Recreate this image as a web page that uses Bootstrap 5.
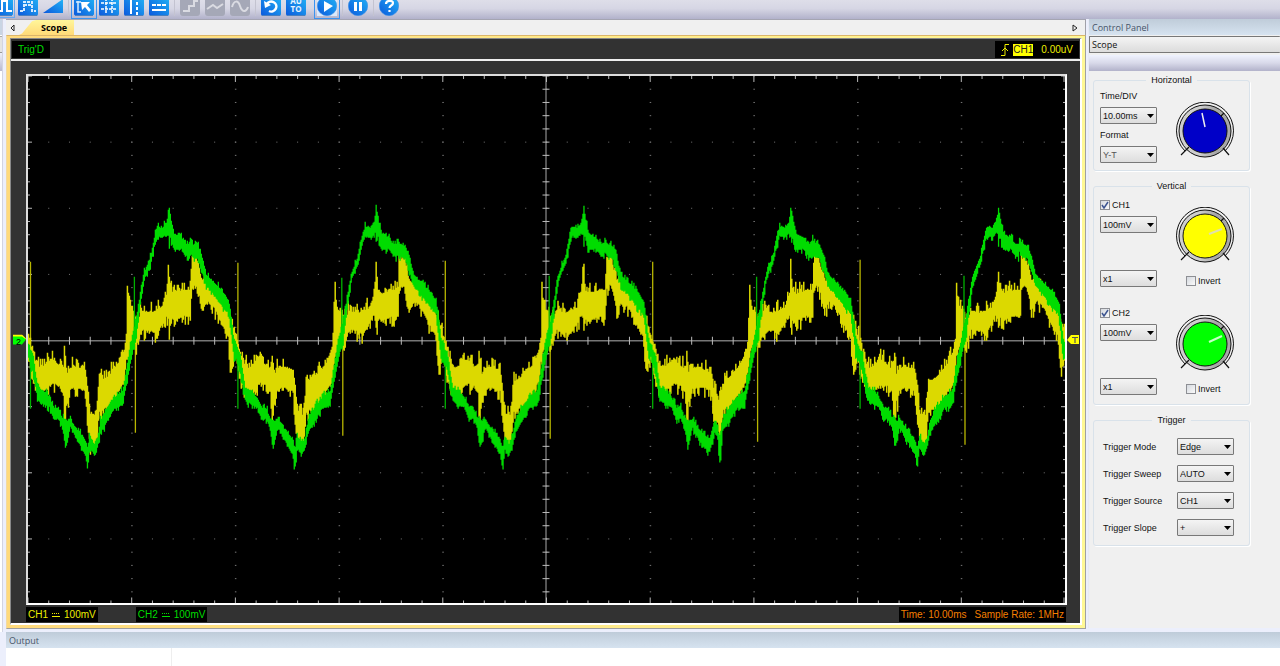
<!DOCTYPE html>
<html lang="en">
<head>
<meta charset="utf-8">
<meta name="viewport" content="width=device-width, initial-scale=1">
<title>Scope</title>
<link href="https://cdn.jsdelivr.net/npm/bootstrap@5.3.0/dist/css/bootstrap.min.css" rel="stylesheet">
<script src="https://cdn.jsdelivr.net/npm/bootstrap@5.3.0/dist/js/bootstrap.bundle.min.js" defer></script>
<style>
body{background:#eceffc;font:9px/12px "Liberation Sans",Arial,sans-serif;color:#111;overflow:hidden}
button{border:0;background:none;padding:0;line-height:0}
svg{display:block;flex:none}
.ui{font-family:"Open Sans","Noto Sans",sans-serif}
.toolbar{height:19px;background:linear-gradient(#dedee9,#d6d6e4 45%,#b2b2cb);overflow:hidden;gap:5px;padding-bottom:3px}
.toolbar button{width:20px;height:20px;flex:none}
.toolbar .lead-in{margin-left:-7px;outline:1px solid #68a9ef;outline-offset:1px;background:#dbe9fb}
.toolbar .picked{outline:1px solid #3b93f0;outline-offset:2px;background:#dbe9fb}
.toolbar .rule{width:1px;height:20px;background:#c3c3d0;flex:none}
.edge{width:3px;background:linear-gradient(#c9d5e4 0 16px,#fff 16px 17px,#aaa 17px 18px,#e4e4e4 18px 33px,#999 33px 34px,#eef0fa 34px,#b8b8cf 52px,#fff 52px);border-right:1px solid #d2d4e2;overflow:hidden}
.dock{margin:0 0 3px 3px;background:#f0f0f0}
.tabs{height:16px;border-top:1px solid #a5a5b2;border-right:1px solid #a0a0a8}
.tabs .arrow{width:12px;height:15px}
.tab{margin-left:1px;width:55px;height:15px;padding-left:22px;line-height:16px;font-weight:700;color:#000;background:linear-gradient(#fff69a,#ffda78);clip-path:polygon(0 100%,3px 90%,13px 8%,17px 0,100% 0,100% 100%)}
.frame{padding:2px 3px 3px 3px;background:linear-gradient(90deg,#ffda7c,#fff895);border:1px solid #a0a0a0;border-left-color:#f3d9a0;border-top-color:#dbb56a}
.scope{background:#323232;border:1px solid #888;border-right:2px solid #fff;border-bottom:2px solid #fff;font-size:10px}
.readouts{height:22px;border-bottom:2px solid #eee;padding:2px 0 0 1px}
.readouts .trigger{margin-right:1px}
.lcd{background:#000;height:17px;line-height:17px;padding:0 6px;white-space:nowrap}
.plotbox{margin:13px 13px 0 15px;border:2px solid #ddd;border-right-color:#fff;border-bottom-color:#fff;background:#000;min-height:0}
.plotbox>svg{width:100%;height:100%;flex:1 1 0;min-height:0}
.marker{position:absolute;top:50%;transform:translateY(-50%)}
.marker.zero{right:100%;margin-right:2px}
.marker.trig{left:100%;margin-left:2px}
.status{padding:2px 14px 1px 15px;height:18px;gap:38px}
.status .lcd{height:15px;line-height:15px;padding:0 2px}
.orange{color:#f57f00}.yel{color:#ee0}.grn{color:#00dc00}
.panel{width:192px;margin-left:2px;border-left:1px solid #e8eaf5;background:#f0f0f0}
.title{height:16px;line-height:17px;background:linear-gradient(#bfccd9,#d6e3f0);color:#465468;padding-left:3px}
.wide{height:17px;margin-top:1px}
.band{height:16px;margin-top:2px;background:linear-gradient(#eff2fe,#d8d9e9 50%,#b2b2ca)}
select{appearance:none;font:inherit;color:#111;border:1px solid #787878;border-radius:1px;height:17px;width:57px;padding:0 0 0 2px;background:url("data:image/svg+xml,%3Csvg xmlns='http://www.w3.org/2000/svg' width='7' height='4'%3E%3Cpath d='M0 0h7L3.500 4z'/%3E%3C/svg%3E") no-repeat right 2px center,linear-gradient(#f4f4f4,#ddd)}
select.wide{width:100%;border-right:0;background:linear-gradient(#f4f4f4,#dcdcdc)}
.groups{gap:9px;padding-top:3px}
fieldset{width:157px;margin-left:4px;border:1px solid #d9e2ea;border-radius:3px;box-shadow:1px 1px 0 #fff;padding:0 6px}
fieldset>div{margin-right:9px}
legend{float:none;width:auto;margin:0 auto;padding:0 5px;font-size:9px;line-height:12px;height:12px}
.tick{appearance:none;width:10px;height:10px;margin:0;border:1px solid #8d8f94;background:linear-gradient(135deg,#d5d9df,#fafafa);flex:none}
.tick:checked{background:url("data:image/svg+xml,%3Csvg xmlns='http://www.w3.org/2000/svg' viewBox='0 0 8 8'%3E%3Cpath d='M1 4l2 3 4-6' fill='none' stroke='%233c5490' stroke-width='1.500'/%3E%3C/svg%3E"),linear-gradient(135deg,#d5d9df,#fafafa)}
.check{gap:2px}
.field{gap:5px}
.horizontal{padding:4px 0 7px}
.horizontal svg{margin-top:12px}
.horizontal #fmt{color:#555}
.vertical{gap:20px;padding:7px 0 9px}
.knobrow{height:65px;margin-bottom:6px}
.knobrow svg{margin-top:8px}
.invert{width:48px}
.triggers{gap:10px;padding:12px 0 9px 3px}
.output{height:34px;margin-left:6px;background:#fff}
.outcol{width:166px;border-right:1px solid #eee}
</style>
</head>
<body class="vh-100 d-flex flex-column">
<svg width="0" height="0" class="position-absolute" aria-hidden="true">
  <defs>
    <linearGradient id="blue" x1="1" y1="0" x2="0" y2="1"><stop offset="0" stop-color="#22b4f6"/><stop offset="1" stop-color="#0b58dc"/></linearGradient>
    <linearGradient id="ring"><stop offset=".4" stop-color="#cecece"/><stop offset=".7" stop-color="#a8a8a8"/></linearGradient>
    <g id="tile"><rect width="20" height="20" rx="2" fill="url(#blue)"/><path d="M1 19.500h18" stroke="#4a7fbd"/></g>
    <g id="disc"><circle cx="10" cy="10" r="9.700" fill="url(#blue)" stroke="#3e8fe4" stroke-width=".6"/></g>
    <g id="dial">
      <path d="M9 49A28.500 28.500 0 1 1 49 49" fill="none" stroke="#111"/>
      <circle cx="29" cy="29" r="26" fill="url(#ring)" stroke="#111"/>
      <path d="M5 53l8-8M53 53l-6-7M44 15l4-4" stroke="#111" stroke-width="1.200"/>
    </g>
  </defs>
</svg>

<header class="toolbar d-flex align-items-end flex-shrink-0">
  <button class="lead-in" aria-label="Pulse"><svg width="20" height="20"><use href="#tile"/><path d="M2 15h7V5h5v10h5" fill="none" stroke="#fff" stroke-width="2"/></svg></button>
  <button aria-label="Pulse train"><svg width="20" height="20"><use href="#tile"/><path d="M2 15h4V6h8v9h4M6 9h8" fill="none" stroke="#d6eafd" stroke-width="2" stroke-dasharray="3 1"/></svg></button>
  <button aria-label="Ramp"><svg width="20" height="20"><path d="M0 17L20 3v14z" fill="url(#blue)"/></svg></button>
  <span class="rule"></span>
  <button class="picked" aria-label="Select"><svg width="20" height="20"><use href="#tile"/><path d="M2 6h5M4 5v11h3" stroke="#d6eafd" fill="none" stroke-width="1.500"/><path d="M7 6h9l-3 3 4 5-2 2-4-5-3 3z" fill="#fff"/></svg></button>
  <button aria-label="Grid"><svg width="20" height="20"><use href="#tile"/><path d="M2 7h16M2 13h16M7 2v16M13 2v16" stroke="#fff" stroke-width="1.500" stroke-dasharray="3 1"/></svg></button>
  <button aria-label="Vertical cursors"><svg width="20" height="20"><use href="#tile"/><path d="M7 2v16" stroke="#fff" stroke-width="2"/><path d="M13 1v18" stroke="#fff" stroke-width="2" stroke-dasharray="3 2"/></svg></button>
  <button aria-label="Horizontal cursors"><svg width="20" height="20"><use href="#tile"/><path d="M3 14h14" stroke="#fff" stroke-width="2"/><path d="M3 9h15" stroke="#fff" stroke-width="2" stroke-dasharray="4 1"/></svg></button>
  <span class="rule"></span>
  <button aria-label="Step" disabled><svg width="20" height="20"><rect width="20" height="20" rx="3" fill="#a5a8b7"/><path d="M3 15h6v-5h5V5h4" fill="none" stroke="#dadbe2" stroke-width="2"/></svg></button>
  <button aria-label="Linear" disabled><svg width="20" height="20"><rect width="20" height="20" rx="3" fill="#a5a8b7"/><path d="M2 13l6-4 4 3 6-4" fill="none" stroke="#dadbe2" stroke-width="2"/></svg></button>
  <button aria-label="Sine" disabled><svg width="20" height="20"><rect width="20" height="20" rx="3" fill="#a5a8b7"/><path d="M2 11C4 4 8 4 10 10s6 7 8 1" fill="none" stroke="#dadbe2" stroke-width="2"/></svg></button>
  <span class="rule"></span>
  <button aria-label="Refresh"><svg width="20" height="20"><use href="#tile"/><path d="M6 8a5 5 0 1 1 2 7" fill="none" stroke="#fff" stroke-width="2.500"/><path d="M3 5l1 7 6-3z" fill="#fff"/></svg></button>
  <button aria-label="Auto"><svg width="20" height="20" font-family="Open Sans" font-weight="700" font-size="8" fill="#e8f4ff" text-anchor="middle"><use href="#tile"/><text x="10" y="8">AU</text><text x="10" y="16">TO</text></svg></button>
  <span class="rule invisible"></span>
  <button class="picked" aria-label="Run"><svg width="20" height="20"><use href="#disc"/><path d="M7 5l9 5-9 6z" fill="#fff"/></svg></button>
  <span class="rule"></span>
  <button aria-label="Pause"><svg width="20" height="20"><use href="#disc"/><path d="M7.500 6v9M12.500 6v9" stroke="#fff" stroke-width="3"/></svg></button>
  <span class="rule"></span>
  <button aria-label="Help"><svg width="20" height="20"><use href="#disc"/><path d="M7 8c0-4 7-4 7-1 0 3-3.500 2-3.500 5M10.500 14v2" fill="none" stroke="#fff" stroke-width="2.200"/></svg></button>
</header>

<div class="d-flex flex-grow-1" style="min-height:0">
  <div class="edge flex-shrink-0"></div>
  <main class="dock d-flex flex-column flex-grow-1">
    <nav class="tabs d-flex">
      <button class="arrow" aria-label="Previous tab"><svg width="12" height="15"><path d="M8 5v6l-3-3z" fill="none" stroke="#222"/></svg></button>
      <a href="#" class="tab ui text-decoration-none">Scope</a>
      <button class="arrow ms-auto me-1" aria-label="Next tab"><svg width="12" height="15"><path d="M4 5v6l4-3z" fill="none" stroke="#222"/></svg></button>
    </nav>
    <div class="frame d-flex flex-column flex-grow-1">
      <section class="scope d-flex flex-column flex-grow-1">
        <div class="readouts d-flex justify-content-between">
          <span class="lcd grn">Trig'D</span>
          <span class="lcd yel trigger d-flex align-items-center">
            <svg class="me-1" width="8" height="14"><path d="M0 12.500h4V1.500h4M1 8l3-3 3 3" fill="none" stroke="#ee0"/></svg>
            <span style="background:#ff0;color:#222;line-height:12px">CH1</span><span class="ms-2">0.00uV</span>
          </span>
        </div>
        <div class="plotbox d-flex flex-grow-1 position-relative">
          <svg id="plot" viewBox="0 0 1038 528" preserveAspectRatio="none" role="img" aria-label="Waveforms of CH1 and CH2"></svg>
          <span class="marker zero"><svg width="13" height="11"><path d="M0 0h9l4 4-4 4H0z" fill="#ff0"/><path d="M0 2h9l4 3-4 5H0z" fill="#0f0"/><text x="3" y="10" font-size="9">2</text></svg></span>
          <span class="marker trig"><svg width="12" height="10"><path d="M12 0H4L0 5l4 4h8z" fill="#ff0"/><path d="M5 2.500h6M8 2v6" stroke="#555" stroke-width="1.200"/></svg></span>
        </div>
        <div class="status d-flex">
          <span class="lcd yel d-flex align-items-center gap-1"><span>CH1</span><svg width="8" height="6"><path d="M0 1.500h8" stroke="#ee0" stroke-dasharray="1 1"/><path d="M0 4.500h8" stroke="#ee0"/></svg><span>100mV</span></span>
          <span class="lcd grn d-flex align-items-center gap-1"><span>CH2</span><svg width="8" height="6"><path d="M0 1.500h8" stroke="#00dc00" stroke-dasharray="1 1"/><path d="M0 4.500h8" stroke="#00dc00"/></svg><span>100mV</span></span>
          <span class="lcd orange d-flex ms-auto gap-2"><span>Time: 10.00ms</span><span>Sample Rate: 1MHz</span></span>
        </div>
      </section>
    </div>
  </main>

  <aside class="panel flex-shrink-0 mb-1">
    <div class="title ui">Control Panel</div>
    <select class="wide ui d-block" aria-label="Instrument"><option>Scope</option></select>
    <div class="band"></div>
    <div class="groups d-flex flex-column">
      <fieldset>
        <legend>Horizontal</legend>
        <div class="horizontal d-flex justify-content-between align-items-start">
          <div class="d-flex flex-column field">
            <label for="tdiv">Time/DIV</label>
            <select id="tdiv"><option>10.00ms</option></select>
            <label for="fmt">Format</label>
            <select id="fmt"><option>Y-T</option></select>
          </div>
          <svg width="58" height="58"><use href="#dial"/><circle cx="29" cy="29" r="22" fill="#0000c8" stroke="#111"/><path d="M26 11l3 14" stroke="#eee" stroke-width="1.500"/></svg>
        </div>
      </fieldset>
      <fieldset>
        <legend>Vertical</legend>
        <div class="vertical d-flex flex-column">
          <div>
            <div class="knobrow d-flex justify-content-between">
              <div class="d-flex flex-column field">
                <label class="check d-flex align-items-center"><input type="checkbox" class="tick" checked>CH1</label>
                <select aria-label="CH1 scale"><option>100mV</option></select>
              </div>
              <svg width="58" height="58"><use href="#dial"/><circle cx="29" cy="29" r="22" fill="#ff0" stroke="#111"/><path d="M33 27l13-5" stroke="#e0e0b0" stroke-width="2"/></svg>
            </div>
            <div class="d-flex justify-content-between align-items-center">
              <select aria-label="CH1 probe"><option>x1</option></select>
              <label class="invert check d-flex align-items-center mt-1"><input type="checkbox" class="tick">Invert</label>
            </div>
          </div>
          <div>
            <div class="knobrow d-flex justify-content-between">
              <div class="d-flex flex-column field">
                <label class="check d-flex align-items-center"><input type="checkbox" class="tick" checked>CH2</label>
                <select aria-label="CH2 scale"><option>100mV</option></select>
              </div>
              <svg width="58" height="58"><use href="#dial"/><circle cx="29" cy="29" r="22" fill="#0f0" stroke="#111"/><path d="M33 27l13-6" stroke="#c8ffc8" stroke-width="2"/></svg>
            </div>
            <div class="d-flex justify-content-between align-items-center">
              <select aria-label="CH2 probe"><option>x1</option></select>
              <label class="invert check d-flex align-items-center mt-1"><input type="checkbox" class="tick">Invert</label>
            </div>
          </div>
        </div>
      </fieldset>
      <fieldset>
        <legend>Trigger</legend>
        <div class="triggers d-flex flex-column">
          <div class="d-flex justify-content-between align-items-center"><label for="t1">Trigger Mode</label><select id="t1"><option>Edge</option></select></div>
          <div class="d-flex justify-content-between align-items-center"><label for="t2">Trigger Sweep</label><select id="t2"><option>AUTO</option></select></div>
          <div class="d-flex justify-content-between align-items-center"><label for="t3">Trigger Source</label><select id="t3"><option>CH1</option></select></div>
          <div class="d-flex justify-content-between align-items-center"><label for="t4">Trigger Slope</label><select id="t4"><option>+</option></select></div>
        </div>
      </fieldset>
    </div>
  </aside>
</div>

<footer class="output d-flex flex-column flex-shrink-0">
  <div class="title ui">Output</div>
  <div class="outcol flex-grow-1"></div>
</footer>

<script>
// Envelopes of one mains cycle, three units per screen pixel: position, top, bottom.
const ch1=[[82,430,480],[84,440,500],[92,475,550],[105,520,588],[120,535,600],[140,515,585],[155,507,572],[175,530,580],[187,535,600],[190,495,690],[193,510,690],[197,550,620],[200,550,640],[206,535,590],[225,530,585],[254,540,595],[257,570,660],[266,650,720],[268,670,755],[285,675,750],[290,620,700],[293,575,660],[320,560,640],[350,525,600],[370,480,565],[376,440,500],[378,270,490],[381,320,480],[388,360,460],[397,362,440],[405,385,460],[415,380,440],[420,362,412],[450,368,415],[465,362,425],[485,352,390],[495,320,368],[500,310,370],[502,225,380],[505,260,420],[509,300,375],[520,310,385],[550,300,370],[569,300,375],[572,205,290],[585,205,275],[595,240,310],[603,270,355],[620,285,325],[640,310,345],[655,330,380],[670,345,410],[682,370,430],[688,390,510],[692,400,540],[700,420,490],[705,440,500]];
const ch2=[[82,460,490],[84,470,505],[95,490,540],[110,590,625],[130,602,640],[145,620,645],[160,650,685],[172,650,680],[185,685,710],[189,685,740],[193,690,768],[200,690,745],[208,685,705],[220,705,730],[240,730,765],[254,750,790],[257,765,820],[261,770,825],[266,735,770],[280,760,790],[290,740,765],[298,690,725],[315,655,695],[340,620,650],[365,600,640],[375,540,580],[385,480,530],[395,430,480],[404,390,450],[408,370,420],[418,310,340],[430,245,260],[450,195,215],[460,140,165],[470,108,130],[485,112,138],[497,95,125],[502,65,120],[504,50,165],[508,75,130],[515,110,165],[520,130,175],[540,140,170],[555,160,192],[564,160,195],[567,140,180],[575,160,195],[590,165,200],[603,195,240],[615,250,280],[635,272,305],[665,302,345],[683,330,365],[690,370,420],[698,440,490],[705,465,510]];
// The fourth cycle dips later than the others.
const late=(a,cut)=>[...a.filter(p=>p[0]<245),...cut,...a.filter(p=>p[0]>304)];
const ch1Late=late(ch1,[[255,545,585],[266,550,600],[269,590,670],[285,620,690],[289,640,760],[293,610,700],[299,585,655]]);
const ch2Late=late(ch2,[[258,745,780],[267,720,755],[275,690,720],[284,705,740],[288,740,820],[292,735,800],[298,690,715]]);
const PERIOD=207.6,WIDTH=1038;
let seed=7;
const noise=()=>(seed=(seed*16807)%2147483647)/2147483647;
function at(a,x){
  let i=1;while(i<a.length-1&&a[i][0]<x)i++;
  const p=a[i-1],q=a[i],t=Math.max(0,Math.min(1,(x-p[0])/(q[0]-p[0])));
  return [p[1]+(q[1]-p[1])*t,p[2]+(q[2]-p[2])*t];
}
const y=v=>Math.round(v/3+115);
function trace(env,envLate,spread,rough){
  let d='';
  for(let x=0;x<WIDTH;x++){
    const n=Math.floor(x/PERIOD),u=82+(x-n*PERIOD)*3;
    const [a,b]=at(n===3?envLate:env,u);
    const top=spread+rough*noise()**3,bottom=spread+rough*noise()**3;
    d+=`M${x+.5} ${y(a-top)}V${y(b+bottom)+1}`;
  }
  return d;
}
let grid='',center='',glitch1='',glitch2='';
for(let i=0;i<=50;i++){
  const x=Math.min(i*20.76,1037);
  for(let r=1;r<8;r++)grid+=`M${x-.5} ${r*66.2}h1`;
  center+=`M${x} 261v8`;
  const len=i%5?3:6;center+=`M${x} 0v${len}M${x} 528v-${len}`;
}
for(let j=0;j<=40;j++){
  const v=j*13.24;
  for(let c=1;c<10;c++)grid+=`M${c*103.8-.5} ${v}h1.500`;
  const len=j%5?2:4;
  center+=`M515 ${v}h7M0 ${v}h${len}M1038 ${v}h-${len}`;
}
for(let n=0;n<5;n++){
  const s=n*PERIOD,tall=[0,4,-2,0,-4][n];
  glitch1+=`M${s+107.500} ${y(400)}V${y(725+n*9)}M${s+2.500} ${y(212+tall)}V${y(460)}`;
  glitch2+=`M${s+106.500} ${y(258+tall)}V${y(420)}M${s+2.500} ${y(480)}V${y(655)}`;
}
document.getElementById('plot').innerHTML=
`<path d="${grid}" stroke="#777" fill="none"/>
<path d="M0 265H1038" stroke="#777" stroke-width="1.500"/><path d="M518.500 0V528" stroke="#aaa"/>
<path d="${center}" stroke="#bbb" fill="none"/>
<path d="${glitch1}" stroke="#b8b600" stroke-width="1.300"/>
<path d="${trace(ch1,ch1Late,2,34)}" stroke="#dcd900" stroke-width="1.500"/>
<path d="${glitch2}" stroke="#00b000" stroke-width="1.300"/>
<path d="${trace(ch2,ch2Late,0,16)}" stroke="#00dc00" stroke-width="1.300"/>`;
</script>
</body>
</html>
